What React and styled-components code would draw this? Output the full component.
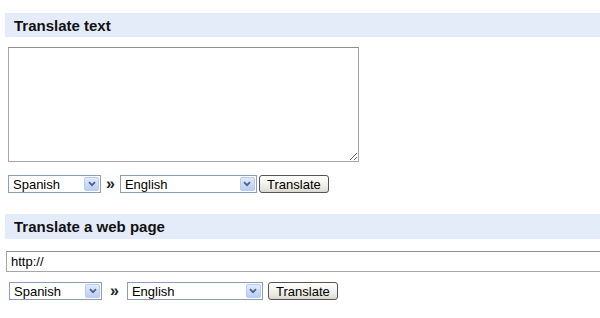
import React from 'react';
import styled, { createGlobalStyle } from 'styled-components';

const GlobalStyle = createGlobalStyle`
  body {
    margin: 0;
    background: #ffffff;
    font-family: "Liberation Sans", Arial, sans-serif;
    color: #000;
  }
`;

const Page = styled.div`
  width: 600px;
  height: 318px;
  overflow: hidden;
  padding: 13px 0 0 5px;
  box-sizing: border-box;
`;

const SectionTitle = styled.h2`
  margin: ${(p) => (p.$first ? '0' : '21px')} 0 0 0;
  height: ${(p) => p.$height}px;
  display: flex;
  align-items: center;
  padding-left: 9px;
  background: #e5ecf9;
  font-size: 15px;
  font-weight: bold;
  color: #111;
`;

const TextBox = styled.textarea`
  display: block;
  margin: 10px 0 0 3px;
  width: 351px;
  height: 115px;
  box-sizing: border-box;
  border: 1px solid #a7a7a7;
  border-top-color: #8f8f8f;
  background: #fff;
  resize: both;
  font-family: "Liberation Sans", Arial, sans-serif;
  font-size: 13px;
`;

const UrlInput = styled.input`
  display: block;
  margin: 12px 0 0 1px;
  width: 620px;
  height: 21px;
  box-sizing: border-box;
  border: 1px solid #a7a7a7;
  border-top-color: #8f8f8f;
  padding: 0 4px;
  font-family: "Liberation Sans", Arial, sans-serif;
  font-size: 13px;
  color: #000;
  outline: none;
`;

const Row = styled.div`
  display: flex;
  align-items: center;
  margin-top: ${(p) => p.$top}px;
  padding-left: ${(p) => p.$indent}px;
  height: 18px;
`;

const Select = styled.div`
  display: flex;
  align-items: center;
  justify-content: space-between;
  width: ${(p) => p.$width}px;
  height: 18px;
  box-sizing: border-box;
  border: 1px solid #8c9db5;
  background: #fff;
  padding: 0 1px 0 4px;
  font-size: 13px;
`;

const Arrow = styled.span`
  display: flex;
  align-items: center;
  justify-content: center;
  width: 15px;
  height: 14px;
  box-sizing: border-box;
  border: 1px solid #b8cbf2;
  border-radius: 2px;
  background: linear-gradient(#e2eafd, #b9cdf6);
`;

const Chevrons = styled.span`
  display: inline-block;
  margin: 0 ${(p) => p.$space}px;
  font-size: 16px;
  font-weight: bold;
  line-height: 18px;
  color: #222;
`;

const Button = styled.button`
  margin-left: ${(p) => p.$space}px;
  width: 70px;
  height: 18px;
  padding: 0;
  border: 1px solid #555;
  border-radius: 3px;
  background: linear-gradient(#ffffff, #ebebe4 70%, #d8d8d0);
  font-family: "Liberation Sans", Arial, sans-serif;
  font-size: 13px;
  color: #000;
`;

function Dropdown({ width, label }) {
  return (
    <Select $width={width}>
      <span>{label}</span>
      <Arrow>
        <svg width="8" height="6" viewBox="0 0 8 6">
          <path d="M1 1.2 L4 4.2 L7 1.2" fill="none" stroke="#4d6185" strokeWidth="1.8" />
        </svg>
      </Arrow>
    </Select>
  );
}

function LanguageRow({ top, indent, space, fromWidth, toWidth, buttonSpace }) {
  return (
    <Row $top={top} $indent={indent}>
      <Dropdown width={fromWidth} label="Spanish" />
      <Chevrons $space={space}>»</Chevrons>
      <Dropdown width={toWidth} label="English" />
      <Button $space={buttonSpace}>Translate</Button>
    </Row>
  );
}

export default function App() {
  return (
    <>
      <GlobalStyle />
      <Page>
        <SectionTitle $first $height={24}>Translate text</SectionTitle>
        <TextBox />
        <LanguageRow top={13} indent={3} space={5} fromWidth={93} toWidth={137} buttonSpace={2} />

        <SectionTitle $height={25}>Translate a web page</SectionTitle>
        <UrlInput defaultValue="http://" />
        <LanguageRow top={10} indent={4} space={8} fromWidth={93} toWidth={136} buttonSpace={5} />
      </Page>
    </>
  );
}
